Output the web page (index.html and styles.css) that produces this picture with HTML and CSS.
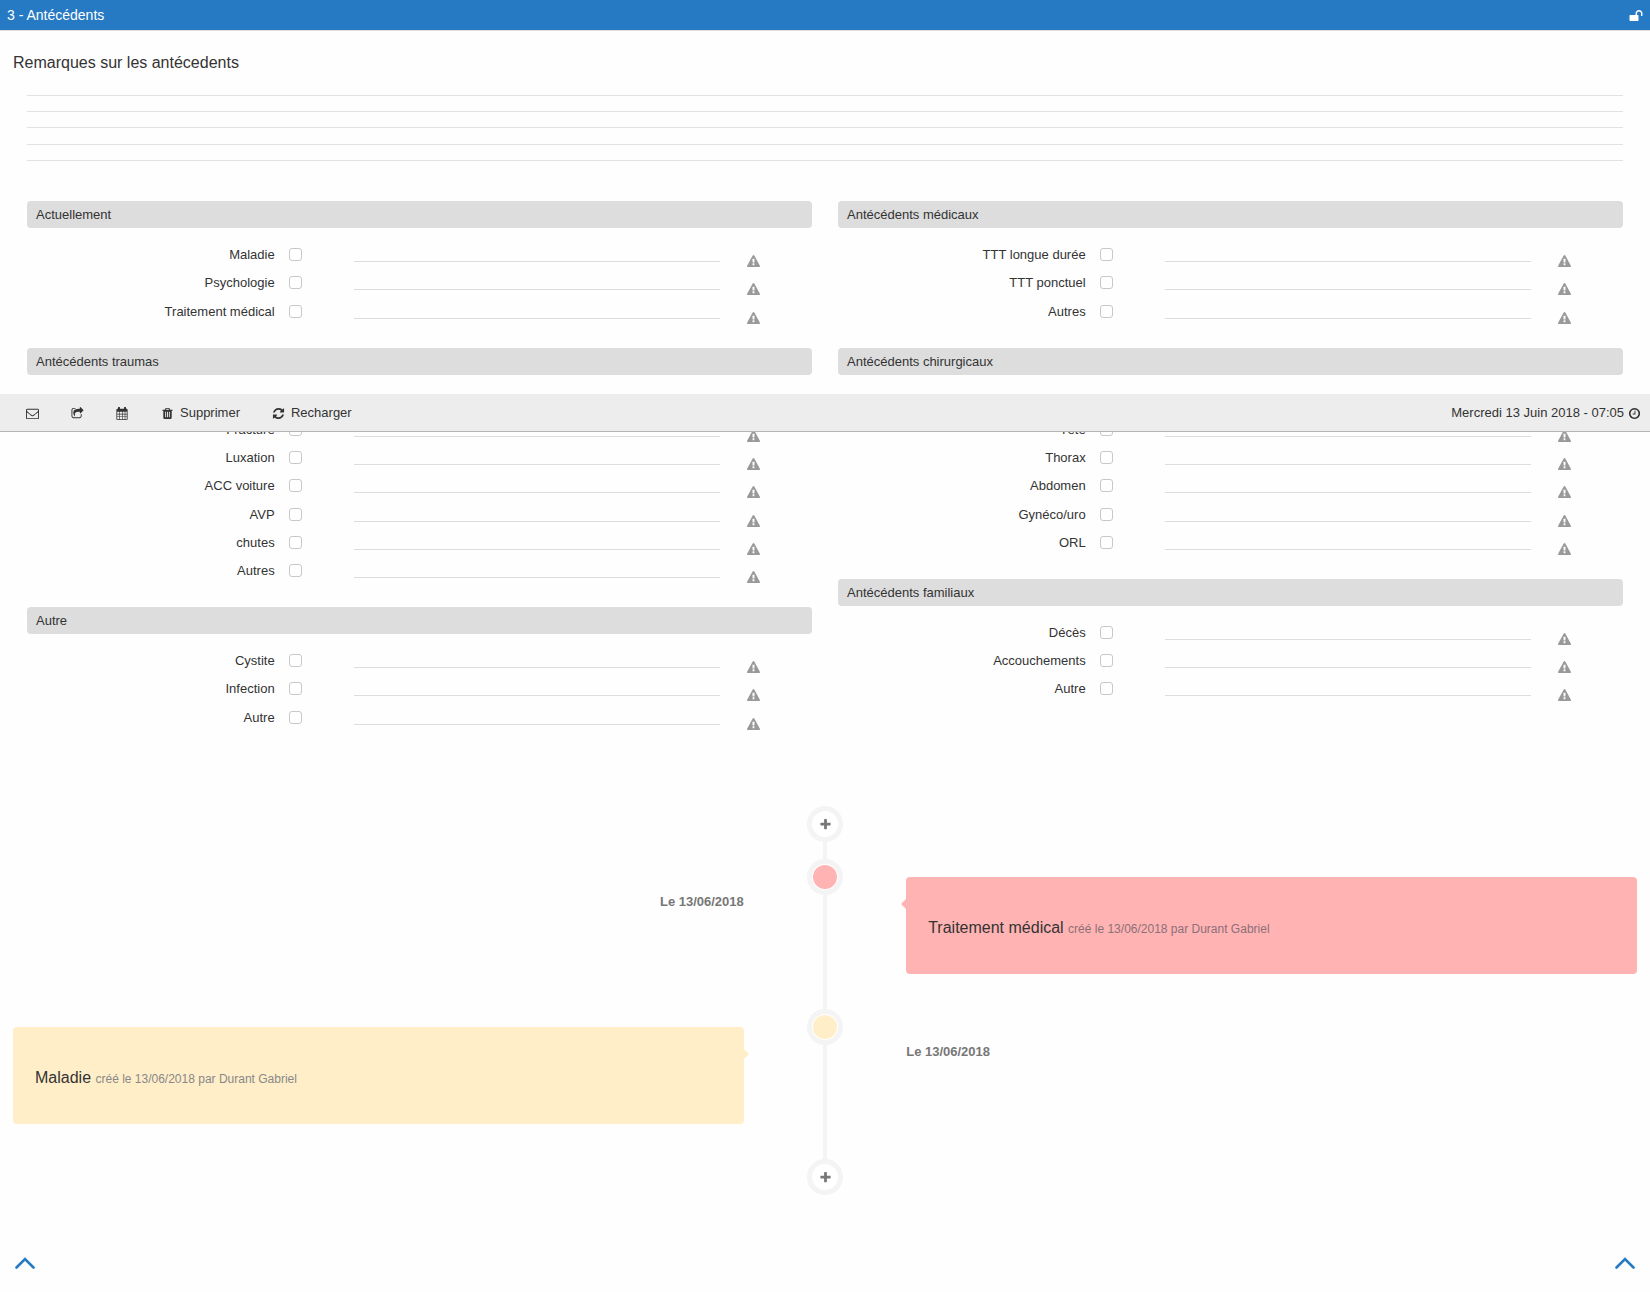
FILE: index.html
```
<!DOCTYPE html>
<html lang="fr">
<head>
<meta charset="utf-8">
<title>Antécédents</title>
<link rel="stylesheet" href="styles.css">
</head>
<body>
<svg class="sprite" aria-hidden="true">
  <symbol id="i-warning" viewBox="0 0 1792 1792"><path d="M1024 1375v-190q0-14-9.500-23.500t-22.500-9.500h-192q-13 0-22.500 9.500t-9.500 23.500v190q0 14 9.500 23.500t22.500 9.500h192q13 0 22.500-9.500t9.500-23.500zm-2-374l18-459q0-12-10-19-13-11-24-11h-220q-11 0-24 11-10 7-10 21l17 457q0 10 10 16.500t24 6.500h185q14 0 23.500-6.500t10.500-16.500zm-14-934l768 1408q35 63-2 126-17 29-46.500 46t-63.500 17h-1536q-34 0-63.500-17t-46.500-46q-37-63-2-126l768-1408q17-31 47-49t65-18 65 18 47 49z"/></symbol>
  <symbol id="i-unlock" viewBox="0 0 1792 1792"><path d="M1728 576v256q0 26-19 45t-45 19h-64q-26 0-45-19t-19-45v-256q0-106-75-181t-181-75-181 75-75 181v192h96q40 0 68 28t28 68v576q0 40-28 68t-68 28h-960q-40 0-68-28t-28-68v-576q0-40 28-68t68-28h672v-192q0-185 131.500-316.500t316.500-131.500 316.500 131.500 131.500 316.500z"/></symbol>
  <symbol id="i-mail" viewBox="0 0 1792 1792"><path d="M1664 1504v-768q-32 36-69 66-268 206-426 338-51 43-83 67t-86.500 48.500-102.500 24.500h-2q-48 0-102.500-24.500t-86.500-48.500-83-67q-158-132-426-338-37-30-69-66v768q0 13 9.500 22.500t22.500 9.500h1472q13 0 22.500-9.500t9.500-22.500zm0-1051v-24.500l-.5-13-3-12.500-5.500-9-9-7.500-14-2.500h-1472q-13 0-22.500 9.500t-9.500 22.500q0 168 147 284 193 152 401 317 6 5 35 29.500t46 37.500 44.500 31.500 50.500 27.500 43 9h2q20 0 43-9t50.500-27.500 44.500-31.500 46-37.500 35-29.500q208-165 401-317 54-43 100.500-115.500t46.500-131.500zm128-37v1088q0 66-47 113t-113 47h-1472q-66 0-113-47t-47-113v-1088q0-66 47-113t113-47h1472q66 0 113 47t47 113z"/></symbol>
  <symbol id="i-share" viewBox="0 0 1792 1792"><path d="M1472 989v259q0 119-84.500 203.500t-203.500 84.500h-832q-119 0-203.500-84.500t-84.500-203.500v-832q0-119 84.500-203.500t203.500-84.500h255q13 0 22.500 9.500t9.500 22.500q0 27-26 32-77 26-133 60-10 4-16 4h-112q-66 0-113 47t-47 113v832q0 66 47 113t113 47h832q66 0 113-47t47-113v-214q0-19 18-29 28-13 54-37 16-16 35-8 21 9 21 29zm237-496l-384 384q-18 19-45 19-12 0-25-5-39-17-39-59v-192h-160q-323 0-438 131-119 137-74 473 3 23-20 34-8 2-12 2-16 0-26-13-10-14-21-31t-39.500-68.500-49.500-99.500-38.500-114-17.500-122q0-49 3.500-91t14-90 28-88 47-81.500 68.500-74 94.500-61.500 124.500-48.500 159.500-30.500 196.500-11h160v-192q0-42 39-59 13-5 25-5 26 0 45 19l384 384q19 19 19 45t-19 45z"/></symbol>
  <symbol id="i-calendar" viewBox="0 0 13 13"><path fill-rule="evenodd" d="M1.400 1.800h9.200q1 0 1 1v9.200q0 1-1 1H1.400q-1 0-1-1V2.800q0-1 1-1zM1.200 4.700v2.100h2.100V4.700zm2.700 0v2.100H6V4.700zm2.700 0v2.100h2.100V4.700zm2.700 0v2.100h1.500V4.700zM1.200 7.400v2.100h2.100V7.400zm2.700 0v2.100H6V7.400zm2.700 0v2.100h2.100V7.400zm2.700 0v2.100h1.500V7.400zM1.200 10.100v2.100h2.100v-2.100zm2.700 0v2.100H6v-2.100zm2.700 0v2.100h2.100v-2.100zm2.700 0v2.100h1.500v-2.100z"/><path d="M2.500 0h1q.5 0 .5.500v2.600H2V.5Q2 0 2.500 0zM8.500 0h1q.5 0 .5.500v2.600H8V.5Q8 0 8.500 0z"/></symbol>
  <symbol id="i-trash" viewBox="0 0 1792 1792"><path d="M704 1376v-704q0-14-9-23t-23-9h-64q-14 0-23 9t-9 23v704q0 14 9 23t23 9h64q14 0 23-9t9-23zm256 0v-704q0-14-9-23t-23-9h-64q-14 0-23 9t-9 23v704q0 14 9 23t23 9h64q14 0 23-9t9-23zm256 0v-704q0-14-9-23t-23-9h-64q-14 0-23 9t-9 23v704q0 14 9 23t23 9h64q14 0 23-9t9-23zm-544-992h448l-48-117q-7-9-17-11h-317q-10 2-17 11zm928 32v64q0 14-9 23t-23 9h-96v948q0 83-47 143.500t-113 60.500h-832q-66 0-113-58.500t-47-141.500v-952h-96q-14 0-23-9t-9-23v-64q0-14 9-23t23-9h309l70-167q15-37 54-63t79-26h320q40 0 79 26t54 63l70 167h309q14 0 23 9t9 23z"/></symbol>
  <symbol id="i-refresh" viewBox="0 0 1792 1792"><path d="M1639 1056q0 5-1 7-64 268-268 434.500t-478 166.500q-146 0-282.500-55t-243.500-157l-129 129q-19 19-45 19t-45-19-19-45v-448q0-26 19-45t45-19h448q26 0 45 19t19 45-19 45l-137 137q71 66 161 102t187 36q134 0 250-65t186-179q11-17 53-117 8-23 30-23h192q13 0 22.500 9.500t9.500 22.500zm25-800v448q0 26-19 45t-45 19h-448q-26 0-45-19t-19-45 19-45l138-138q-148-137-349-137-134 0-250 65t-186 179q-11 17-53 117-8 23-30 23h-199q-13 0-22.500-9.500t-9.500-22.500v-7q65-268 270-434.500t480-166.500q146 0 284 55.500t245 156.500l130-129q19-19 45-19t45 19 19 45z"/></symbol>
  <symbol id="i-clock" viewBox="0 0 1792 1792"><path d="M1024 544v448q0 14-9 23t-23 9h-320q-14 0-23-9t-9-23v-64q0-14 9-23t23-9h224v-352q0-14 9-23t23-9h64q14 0 23 9t9 23zm416 352q0-148-73-273t-198-198-273-73-273 73-198 198-73 273 73 273 198 198 273 73 273-73 198-198 73-273zm224 0q0 209-103 385.500t-279.500 279.500-385.500 103-385.500-103-279.500-279.500-103-385.500 103-385.500 279.500-279.500 385.500-103 385.500 103 279.500 279.500 103 385.500z"/></symbol>
  <symbol id="i-plus" viewBox="0 0 1792 1792"><path d="M1600 736v192q0 40-28 68t-68 28h-416v416q0 40-28 68t-68 28h-192q-40 0-68-28t-28-68v-416h-416q-40 0-68-28t-28-68v-192q0-40 28-68t68-28h416v-416q0-40 28-68t68-28h192q40 0 68 28t28 68v416h416q40 0 68 28t28 68z"/></symbol>
  <symbol id="i-up" viewBox="0 0 20 12"><path d="M1.500 10.500L10 2l8.500 8.500" fill="none" stroke="currentColor" stroke-width="2.600" stroke-linecap="round"/></symbol>
</svg>

<header class="topbar">
  <h1>3 - Antécédents</h1>
  <button class="plain" type="button" aria-label="Verrouiller"><svg class="icon icon-lg"><use href="#i-unlock"/></svg></button>
</header>

<div class="toolbar">
  <div class="actions">
    <button class="plain" type="button" aria-label="Envoyer"><svg class="icon"><use href="#i-mail"/></svg></button>
    <button class="plain" type="button" aria-label="Partager"><svg class="icon"><use href="#i-share"/></svg></button>
    <button class="plain" type="button" aria-label="Calendrier"><svg class="icon"><use href="#i-calendar"/></svg></button>
    <button class="plain" type="button"><svg class="icon"><use href="#i-trash"/></svg>Supprimer</button>
    <button class="plain" type="button"><svg class="icon"><use href="#i-refresh"/></svg>Recharger</button>
  </div>
  <div class="now">Mercredi 13 Juin 2018 - 07:05 <svg class="icon"><use href="#i-clock"/></svg></div>
</div>

<main>
  <form>
    <label class="notes-label" for="notes">Remarques sur les antécedents</label>
    <div class="form-body">
      <textarea class="notes" id="notes" rows="4"></textarea>
      <div class="columns">
        <div>
          <section class="group">
            <h2>Actuellement</h2>
            <div class="row"><label for="a1">Maladie</label><input type="checkbox" id="a1"><input type="text" aria-label="Maladie"><svg class="icon"><use href="#i-warning"/></svg></div>
            <div class="row"><label for="a2">Psychologie</label><input type="checkbox" id="a2"><input type="text" aria-label="Psychologie"><svg class="icon"><use href="#i-warning"/></svg></div>
            <div class="row"><label for="a3">Traitement médical</label><input type="checkbox" id="a3"><input type="text" aria-label="Traitement médical"><svg class="icon"><use href="#i-warning"/></svg></div>
          </section>
          <section class="group under-toolbar">
            <h2>Antécédents traumas</h2>
            <div class="row"><label for="b1">Fracture</label><input type="checkbox" id="b1"><input type="text" aria-label="Fracture"><svg class="icon"><use href="#i-warning"/></svg></div>
            <div class="row"><label for="b2">Luxation</label><input type="checkbox" id="b2"><input type="text" aria-label="Luxation"><svg class="icon"><use href="#i-warning"/></svg></div>
            <div class="row"><label for="b3">ACC voiture</label><input type="checkbox" id="b3"><input type="text" aria-label="ACC voiture"><svg class="icon"><use href="#i-warning"/></svg></div>
            <div class="row"><label for="b4">AVP</label><input type="checkbox" id="b4"><input type="text" aria-label="AVP"><svg class="icon"><use href="#i-warning"/></svg></div>
            <div class="row"><label for="b5">chutes</label><input type="checkbox" id="b5"><input type="text" aria-label="chutes"><svg class="icon"><use href="#i-warning"/></svg></div>
            <div class="row"><label for="b6">Autres</label><input type="checkbox" id="b6"><input type="text" aria-label="Autres"><svg class="icon"><use href="#i-warning"/></svg></div>
          </section>
          <section class="group">
            <h2>Autre</h2>
            <div class="row"><label for="c1">Cystite</label><input type="checkbox" id="c1"><input type="text" aria-label="Cystite"><svg class="icon"><use href="#i-warning"/></svg></div>
            <div class="row"><label for="c2">Infection</label><input type="checkbox" id="c2"><input type="text" aria-label="Infection"><svg class="icon"><use href="#i-warning"/></svg></div>
            <div class="row"><label for="c3">Autre</label><input type="checkbox" id="c3"><input type="text" aria-label="Autre"><svg class="icon"><use href="#i-warning"/></svg></div>
          </section>
        </div>
        <div>
          <section class="group">
            <h2>Antécédents médicaux</h2>
            <div class="row"><label for="d1">TTT longue durée</label><input type="checkbox" id="d1"><input type="text" aria-label="TTT longue durée"><svg class="icon"><use href="#i-warning"/></svg></div>
            <div class="row"><label for="d2">TTT ponctuel</label><input type="checkbox" id="d2"><input type="text" aria-label="TTT ponctuel"><svg class="icon"><use href="#i-warning"/></svg></div>
            <div class="row"><label for="d3">Autres</label><input type="checkbox" id="d3"><input type="text" aria-label="Autres"><svg class="icon"><use href="#i-warning"/></svg></div>
          </section>
          <section class="group under-toolbar">
            <h2>Antécédents chirurgicaux</h2>
            <div class="row"><label for="e1">Tête</label><input type="checkbox" id="e1"><input type="text" aria-label="Tête"><svg class="icon"><use href="#i-warning"/></svg></div>
            <div class="row"><label for="e2">Thorax</label><input type="checkbox" id="e2"><input type="text" aria-label="Thorax"><svg class="icon"><use href="#i-warning"/></svg></div>
            <div class="row"><label for="e3">Abdomen</label><input type="checkbox" id="e3"><input type="text" aria-label="Abdomen"><svg class="icon"><use href="#i-warning"/></svg></div>
            <div class="row"><label for="e4">Gynéco/uro</label><input type="checkbox" id="e4"><input type="text" aria-label="Gynéco/uro"><svg class="icon"><use href="#i-warning"/></svg></div>
            <div class="row"><label for="e5">ORL</label><input type="checkbox" id="e5"><input type="text" aria-label="ORL"><svg class="icon"><use href="#i-warning"/></svg></div>
          </section>
          <section class="group">
            <h2>Antécédents familiaux</h2>
            <div class="row"><label for="f1">Décès</label><input type="checkbox" id="f1"><input type="text" aria-label="Décès"><svg class="icon"><use href="#i-warning"/></svg></div>
            <div class="row"><label for="f2">Accouchements</label><input type="checkbox" id="f2"><input type="text" aria-label="Accouchements"><svg class="icon"><use href="#i-warning"/></svg></div>
            <div class="row"><label for="f3">Autre</label><input type="checkbox" id="f3"><input type="text" aria-label="Autre"><svg class="icon"><use href="#i-warning"/></svg></div>
          </section>
        </div>
      </div>
    </div>
  </form>

  <div class="timeline">
    <button class="dot dot-add" type="button" aria-label="Ajouter au début"><svg class="icon"><use href="#i-plus"/></svg></button>
    <article class="event">
      <time class="date date-left" datetime="2018-06-13">Le 13/06/2018</time>
      <span class="dot dot-red"></span>
      <div class="card card-right card-red"><h3>Traitement médical <small>créé le 13/06/2018 par Durant Gabriel</small></h3></div>
    </article>
    <article class="event">
      <div class="card card-left card-yellow"><h3>Maladie <small>créé le 13/06/2018 par Durant Gabriel</small></h3></div>
      <span class="dot dot-yellow"></span>
      <time class="date" datetime="2018-06-13">Le 13/06/2018</time>
    </article>
    <button class="dot" type="button" aria-label="Ajouter à la fin"><svg class="icon"><use href="#i-plus"/></svg></button>
  </div>
</main>

<footer class="jump">
  <a href="#" aria-label="Haut de page"><svg><use href="#i-up"/></svg></a>
  <a href="#" aria-label="Haut de page"><svg><use href="#i-up"/></svg></a>
</footer>
</body>
</html>
```
FILE: styles.css
```
* { box-sizing: border-box; }

body {
  margin: 0;
  position: relative;
  background: #fefefe;
  color: #333;
  font: 13px/1.4 "Liberation Sans", Arial, sans-serif;
}

h1, h2, h3 { margin: 0; font-weight: normal; }

.sprite { display: none; }

.icon {
  display: block;
  flex: none;
  width: 13px;
  height: 13px;
  fill: currentColor;
}
.icon-lg { width: 14px; height: 14px; }

.plain {
  display: flex;
  align-items: center;
  gap: 6px;
  padding: 0;
  border: 0;
  background: none;
  color: inherit;
  font: inherit;
  cursor: pointer;
}

/* Title bar */
.topbar {
  display: flex;
  align-items: center;
  justify-content: space-between;
  height: 31px;
  padding: 1px 7px 0;
  border-bottom: 1px solid #ddd;
  background: #2679c3;
  color: #fff;
}
.topbar h1 { font-size: 14px; }

/* Floating toolbar, drawn over the form */
.toolbar {
  position: absolute;
  z-index: 2;
  top: 394px;
  left: 0;
  right: 0;
  display: flex;
  align-items: center;
  justify-content: space-between;
  height: 38px;
  padding: 1px 9px 0 26px;
  border-bottom: 1px solid #b4b4b4;
  background: #ededed;
}
.actions { display: flex; gap: 32px; }
.now { display: flex; align-items: center; gap: 4px; }

/* Form */
.notes-label {
  display: block;
  padding: 21px 13px 0;
  font-size: 16px;
  line-height: 22px;
}
.form-body { padding: 21px 27px 0; }

.notes {
  display: block;
  width: 100%;
  padding: 0 0 1px;
  border: 0;
  outline: 0;
  resize: none;
  overflow: hidden;
  background: repeating-linear-gradient(#e2e2e2 0 1px, transparent 1px 1.25em);
  color: inherit;
  font: inherit;
  line-height: 1.25;
}

.columns {
  display: grid;
  grid-template-columns: 1fr 1fr;
  gap: 26px;
  margin-top: 40px;
}

.group { padding-bottom: 22px; }
.group h2 {
  margin-bottom: 13px;
  padding: 5px 9px 4px;
  border-radius: 4px;
  background: #ddd;
  font-size: 13px;
}
.under-toolbar h2 { margin-bottom: 41px; }

.row {
  display: grid;
  grid-template-columns: 4fr 1fr 6fr 1fr;
  align-items: start;
}
.row label {
  padding: 5px 14px 5px 0;
  text-align: right;
}
.row .icon { margin-top: 14px; color: #999; }

.row input[type="checkbox"] {
  appearance: none;
  width: 13px;
  height: 13px;
  margin: 7px 0 0;
  border: 1px solid #c8c8c8;
  border-radius: 3px;
  background: #fff;
}
.row input[type="checkbox"]:checked { background: #2679c3; }

.row input[type="text"] {
  min-width: 0;
  height: 21px;
  margin-right: 27px;
  padding: 0;
  border: 0;
  border-bottom: 1px solid #ddd;
  outline: 0;
  background: none;
  color: inherit;
  font: inherit;
}

/* Timeline */
.timeline {
  position: relative;
  display: flex;
  flex-direction: column;
  align-items: center;
  padding: 52px 13px 0;
}
.timeline::before {
  content: "";
  position: absolute;
  top: 70px;
  bottom: 18px;
  left: calc(50% - 2px);
  width: 4px;
  background: #f4f4f4;
}

.dot {
  position: relative;
  display: flex;
  align-items: center;
  justify-content: center;
  width: 36px;
  height: 36px;
  padding: 1px 0 0;
  border: 5px solid #f4f4f4;
  border-radius: 50%;
  background: #fff;
  color: #777;
}
.dot-add { margin-bottom: 17px; }
.dot-red, .dot-yellow { padding: 0; }
.dot-red::before, .dot-yellow::before {
  content: "";
  width: 24px;
  height: 24px;
  border-radius: 50%;
}
.dot-red::before, .card-red { background: #ffb3b3; }
.dot-yellow::before, .card-yellow { background: #ffeec8; }

.event {
  display: grid;
  grid-template-columns: 45fr 10fr 45fr;
  justify-items: center;
  align-items: start;
  width: 100%;
  padding-bottom: 35px;
}

.date {
  justify-self: start;
  margin-top: 34px;
  color: #777;
  font-weight: bold;
}
.date-left { justify-self: end; }

.card {
  position: relative;
  width: 100%;
  margin-top: 18px;
  padding: 40px 22px 35px;
  border-radius: 4px;
}
.card::before {
  content: "";
  position: absolute;
  top: 22px;
  border: 5px solid transparent;
}
.card-right::before {
  right: 100%;
  border-left-width: 0;
  border-right-color: #ffb3b3;
}
.card-left::before {
  left: 100%;
  border-right-width: 0;
  border-left-color: #ffeec8;
}
.card h3 { font-size: 16px; line-height: 22px; }
.card small { color: #888; font-size: 12px; line-height: 1; }
.card-red small { color: #8c7078; }

/* Back-to-top links */
.jump {
  display: flex;
  justify-content: space-between;
  padding: 62px 15px 21px;
  color: #2679c3;
}
.jump a { color: inherit; }
.jump svg { display: block; width: 20px; height: 12px; }
```
